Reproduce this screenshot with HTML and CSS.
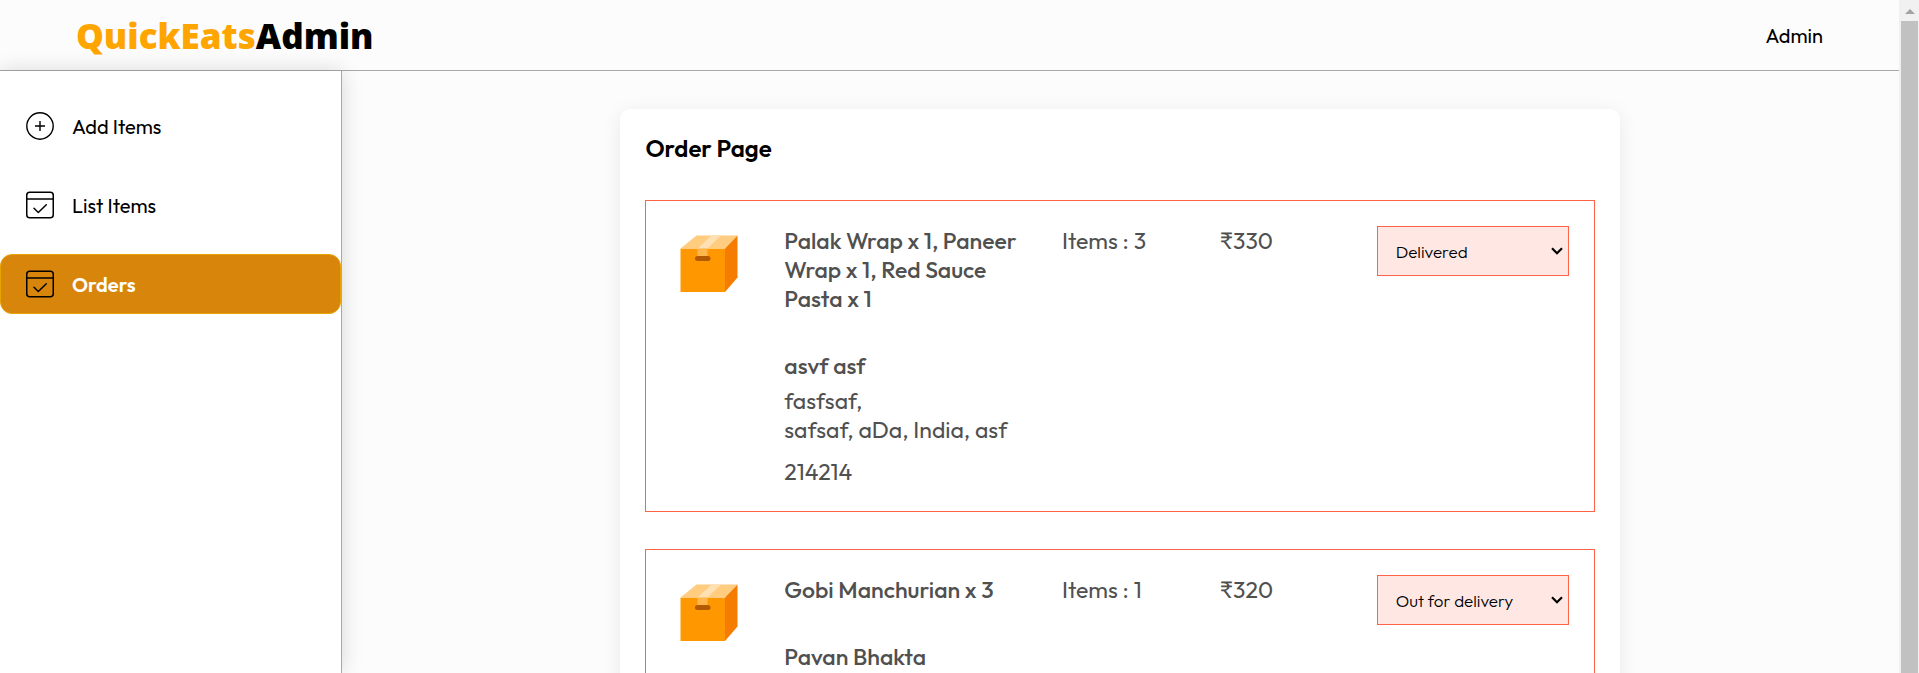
FILE: index.html
```html
<!DOCTYPE html>
<html lang="en">
<head>
  <meta charset="utf-8">
  <title>QuickEats Admin</title>
  <link rel="stylesheet" href="styles.css">
</head>
<body>
  <svg class="defs" aria-hidden="true">
    <symbol id="icon-check" viewBox="0 0 28 28">
      <g fill="none" stroke="#000" stroke-width="1.5" stroke-linecap="round" stroke-linejoin="round">
        <rect x=".75" y="1.25" width="26.5" height="25.5" rx="3"/>
        <path d="M1 8h26M8 17.3l4.300 4.200 8-7.700"/>
      </g>
    </symbol>
    <symbol id="icon-parcel" viewBox="0 0 58 58">
      <path fill="#ff9800" d="M.5 13.500h44.500v43.500H.5z"/>
      <path fill="#ffcc80" d="M.5 13.500L16.500.5h41L45 13.500z"/>
      <path fill="#f57c00" d="M45 13.500L57.500.5v42L45 57z"/>
      <path fill="#ffe0b2" d="M17.500 13.500L31.500.5h9.500L27.500 13.500z"/>
      <path fill="#ffb74d" d="M17.500 13.500h10V21h-10z"/>
      <rect fill="#b35900" x="15" y="21" width="15.500" height="5" rx="2.500"/>
    </symbol>
    <symbol id="icon-chevron" viewBox="0 0 12 8">
      <path fill="none" stroke="#000" stroke-width="2.200" d="M1 1.200l5 5 5-5"/>
    </symbol>
  </svg>
  <div class="window">
    <div class="page">
      <header class="navbar">
        <div class="logo"><span class="logo-name">QuickEats</span>Admin</div>
        <p class="user">Admin</p>
      </header>
      <div class="content">
        <nav class="sidebar">
          <a class="option" href="#add">
            <svg class="option-icon" viewBox="0 0 28 28" aria-hidden="true">
              <g fill="none" stroke="#000" stroke-width="1.400">
                <circle cx="14" cy="14" r="13.200"/>
                <path d="M14 9v10M9 14h10"/>
              </g>
            </svg>
            <span>Add Items</span>
          </a>
          <a class="option" href="#list">
            <svg class="option-icon" aria-hidden="true"><use href="#icon-check"/></svg>
            <span>List Items</span>
          </a>
          <a class="option active" href="#orders" aria-current="page">
            <svg class="option-icon" aria-hidden="true"><use href="#icon-check"/></svg>
            <span>Orders</span>
          </a>
        </nav>
        <main class="main">
          <section class="card">
            <h3 class="title">Order Page</h3>
            <article class="order">
              <svg class="parcel" aria-hidden="true"><use href="#icon-parcel"/></svg>
              <div>
                <p class="food">Palak Wrap x 1, Paneer Wrap x 1, Red Sauce Pasta x 1</p>
                <p class="name">asvf asf</p>
                <p>fasfsaf,</p>
                <p>safsaf, aDa, India, asf</p>
                <p class="phone">214214</p>
              </div>
              <p>Items : 3</p>
              <p>₹330</p>
              <div class="status">
                <select class="status-select" aria-label="Order status">
                  <option>Delivered</option>
                </select>
                <svg class="status-arrow" aria-hidden="true"><use href="#icon-chevron"/></svg>
              </div>
            </article>
            <article class="order">
              <svg class="parcel" aria-hidden="true"><use href="#icon-parcel"/></svg>
              <div>
                <p class="food">Gobi Manchurian x 3</p>
                <p class="name">Pavan Bhakta</p>
              </div>
              <p>Items : 1</p>
              <p>₹320</p>
              <div class="status">
                <select class="status-select" aria-label="Order status">
                  <option>Out for delivery</option>
                </select>
                <svg class="status-arrow" aria-hidden="true"><use href="#icon-chevron"/></svg>
              </div>
            </article>
          </section>
        </main>
      </div>
    </div>
    <div class="scrollbar" aria-hidden="true">
      <svg class="scroll-arrow" viewBox="0 0 10 5"><path fill="#a3a3a3" d="M0 5L5 0l5 5z"/></svg>
      <div class="scroll-thumb"></div>
    </div>
  </div>
</body>
</html>
```
FILE: styles.css
```css
* {
  box-sizing: border-box;
  margin: 0;
  padding: 0;
}

body {
  background: #fcfcfc;
  color: #000;
  font-family: Outfit, Lato, "Noto Sans", sans-serif;
}

.defs {
  display: none;
}

.window {
  display: flex;
  height: 100vh;
  overflow: hidden;
}

.page {
  flex: 1;
  display: flex;
  flex-direction: column;
}

.navbar {
  display: flex;
  align-items: center;
  justify-content: space-between;
  height: 71px;
  padding: 0 4%;
  border-bottom: 1px solid #a9a9a9;
}

.logo {
  font-family: "Noto Sans", sans-serif;
  font-size: 35px;
  font-weight: 900;
}

.logo-name {
  color: #ffa500;
}

.user {
  font-size: 20px;
}

.content {
  flex: 1;
  display: flex;
  min-height: 0;
}

.sidebar {
  width: 18%;
  display: flex;
  flex-direction: column;
  gap: 19px;
  padding-top: 25px;
  background: #fff;
  border-right: 1px solid #a9a9a9;
  box-shadow: 0 0 20px rgba(0, 0, 0, 0.15);
}

.option {
  display: flex;
  align-items: center;
  gap: 18px;
  height: 60px;
  padding: 0 25px;
  border: 1px solid transparent;
  border-radius: 12px;
  color: #000;
  font-size: 20px;
  text-decoration: none;
}

.option.active {
  background: #d8860b;
  border-color: #e6a400;
  color: #fff;
  font-weight: 600;
}

.option-icon {
  width: 28px;
  height: 28px;
}

.main {
  flex: 1;
  padding: 38px 25px;
}

.card {
  max-width: 1000px;
  margin: 0 auto;
  padding: 25px;
  background: #fff;
  border-radius: 10px;
  box-shadow: 0 4px 20px rgba(0, 0, 0, 0.08);
}

.title {
  margin-bottom: 38px;
  font-size: 24px;
  font-weight: 600;
  line-height: 28px;
}

.order {
  display: grid;
  grid-template-columns: 83fr 248fr 128fr 127fr 193fr;
  align-items: start;
  gap: 30px;
  min-height: 312px;
  margin-bottom: 37px;
  padding: 25px;
  border: 1px solid #ff6347;
  color: #505050;
  font-size: 23px;
  line-height: 29px;
}

.parcel {
  width: 58px;
  height: 58px;
  margin: 9px auto 0 9px;
}

.food {
  margin-bottom: 38px;
  font-weight: 500;
}

.name {
  margin-bottom: 6px;
  font-weight: 500;
}

.phone {
  margin-top: 13px;
}

.status {
  display: grid;
  align-items: center;
}

.status-select,
.status-arrow {
  grid-area: 1 / 1;
}

.status-select {
  appearance: none;
  width: 100%;
  height: 50px;
  padding: 0 18px;
  background: #ffe8e4;
  border: 1px solid #ff6347;
  border-radius: 0;
  color: #000;
  font-family: inherit;
  font-size: 17px;
  font-weight: 300;
}

.status-arrow {
  justify-self: end;
  width: 12px;
  height: 8px;
  margin-right: 6px;
  pointer-events: none;
}

.scrollbar {
  width: 20px;
  display: flex;
  flex-direction: column;
  align-items: center;
  gap: 7px;
  padding: 9px 1px 0 2px;
  background: #f1f1f1;
}

.scroll-arrow {
  width: 10px;
  height: 5px;
}

.scroll-thumb {
  flex: 1;
  width: 100%;
  background: #c1c1c1;
}
```
